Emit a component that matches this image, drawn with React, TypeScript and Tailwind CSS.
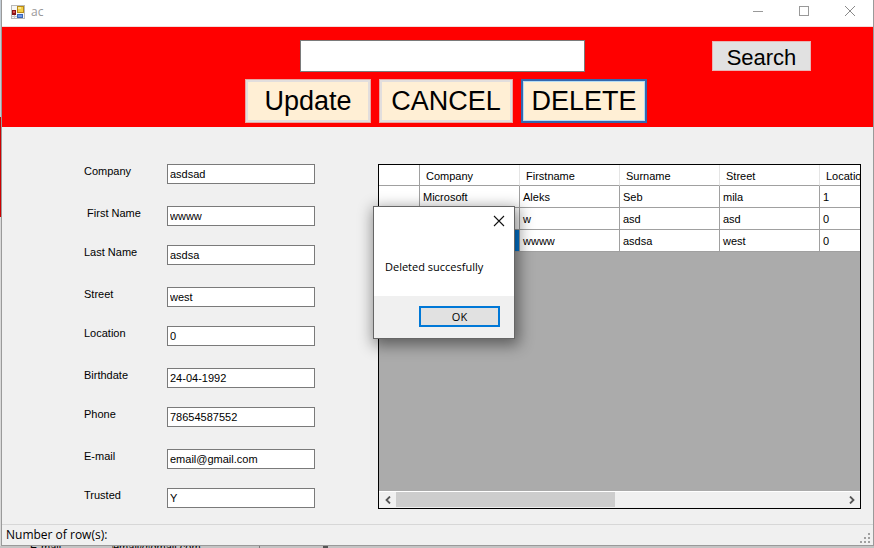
import React from "react";

type Field = { id: string; label: string; value: string };

const fields: Field[] = [
  { id: "company", label: "Company", value: "asdsad" },
  { id: "first-name", label: " First Name", value: "wwww" },
  { id: "last-name", label: "Last Name", value: "asdsa" },
  { id: "street", label: "Street", value: "west" },
  { id: "location", label: "Location", value: "0" },
  { id: "birthdate", label: "Birthdate", value: "24-04-1992" },
  { id: "phone", label: "Phone", value: "78654587552" },
  { id: "email", label: "E-mail", value: "email@gmail.com" },
  { id: "trusted", label: "Trusted", value: "Y" },
];

const columns = ["Company", "Firstname", "Surname", "Street", "Location"];

const rows = [
  ["Microsoft", "Aleks", "Seb", "mila", "1"],
  ["", "w", "asd", "asd", "0"],
  ["", "wwww", "asdsa", "west", "0"],
];

function AppIcon() {
  return (
    <svg width="14" height="14" viewBox="0 0 14 14" shapeRendering="crispEdges" aria-hidden="true">
      <rect x="0.5" y="0.5" width="13" height="13" fill="#f6f6f6" stroke="#b9b9b9" />
      <path d="M1 11.5h5M3.5 10v3" stroke="#c9c9c9" />
      <rect x="6" y="1" width="7" height="7" fill="#b98a16" />
      <rect x="7" y="2" width="5" height="5" fill="#f5cf45" />
      <rect x="7" y="2" width="3" height="2" fill="#fbe791" />
      <rect x="1" y="5" width="4" height="5" fill="#8a1417" />
      <rect x="2" y="6" width="2" height="2" fill="#d9534f" />
      <rect x="6" y="9" width="6" height="4" fill="#3a66b8" />
      <rect x="7" y="10" width="4" height="2" fill="#6f98e6" />
    </svg>
  );
}

function TitleBar() {
  return (
    <div className="flex h-[27px] shrink-0 items-start border-b border-[#f3dcdc] bg-white pl-[9px]">
      <div className="flex h-6 flex-1 items-center gap-[6px]">
        <AppIcon />
        <span className="font-['Open_Sans',sans-serif] text-xs text-[#999999]">ac</span>
      </div>
      <button type="button" aria-label="Minimize" className="flex h-[22px] w-[46px] items-center justify-center">
        <svg width="10" height="11" viewBox="0 0 10 11" shapeRendering="crispEdges">
          <path d="M0 5.5h10" stroke="#999" />
        </svg>
      </button>
      <button type="button" aria-label="Maximize" className="flex h-[22px] w-[46px] items-center justify-center">
        <svg width="10" height="10" viewBox="0 0 10 10" shapeRendering="crispEdges">
          <rect x="0.5" y="0.5" width="9" height="9" fill="none" stroke="#999" />
        </svg>
      </button>
      <button type="button" aria-label="Close" className="flex h-[22px] w-[46px] items-center justify-center">
        <svg width="10" height="10" viewBox="0 0 10 10">
          <path d="M0 0l10 10M10 0L0 10" stroke="#8a8a8a" />
        </svg>
      </button>
    </div>
  );
}

function Toolbar() {
  return (
    <div className="shrink-0 bg-[#ff0000] pt-[13px] pb-1">
      <div className="flex items-center pl-[298px]">
        <input
          type="text"
          aria-label="Search text"
          className="h-8 w-[285px] border border-[#7a7a7a] bg-white px-1 text-xl outline-none"
        />
        <button
          type="button"
          className="ml-[127px] h-[30px] w-[99px] border border-[#e8b4b4] bg-[#e1e1e1] pt-[2px] text-[22px] leading-7"
        >
          Search
        </button>
      </div>
      <div className="mt-[7px] flex gap-2 pl-[243px] text-[27px] leading-10">
        <button type="button" className="h-11 w-[126px] border border-[#e6a9a4] bg-[#ffefd5]">
          <span className="flex h-full items-center justify-center border-2 border-[#e2dedd]">Update</span>
        </button>
        <button type="button" className="h-11 w-[134px] border border-[#e6a9a4] bg-[#ffefd5]">
          <span className="flex h-full items-center justify-center border-2 border-[#e2dedd]">CANCEL</span>
        </button>
        <button type="button" className="h-11 w-[126px] border-2 border-[#3568ae] bg-[#ffefd5]">
          <span className="flex h-full items-center justify-center border border-[#b5dcf5]">DELETE</span>
        </button>
      </div>
    </div>
  );
}

function DetailsForm() {
  return (
    <form className="w-[231px] shrink-0">
      {fields.map((f) => (
        <div key={f.id} className="mt-[19px] flex items-start first:mt-0 even:mt-[22px]">
          <label htmlFor={f.id} className="w-[83px] shrink-0 leading-[14px] whitespace-pre">
            {f.label}
          </label>
          <input
            id={f.id}
            type="text"
            defaultValue={f.value}
            className="h-5 w-[148px] border border-[#7a7a7a] bg-white px-[2px] outline-none"
          />
        </div>
      ))}
    </form>
  );
}

function ScrollBar() {
  return (
    <div className="flex h-[17px] shrink-0 border-t border-white bg-[#f0f0f0]">
      <button type="button" aria-label="Scroll left" className="flex w-[17px] items-center justify-center">
        <svg width="6" height="8" viewBox="0 0 6 8">
          <path d="M5 0.5L1.5 4L5 7.5" fill="none" stroke="#555" strokeWidth="1.8" />
        </svg>
      </button>
      <div className="flex-1 pb-px">
        <div className="h-full w-[49%] bg-[#cdcdcd]" />
      </div>
      <button type="button" aria-label="Scroll right" className="flex w-[17px] items-center justify-center">
        <svg width="6" height="8" viewBox="0 0 6 8">
          <path d="M1 0.5L4.5 4L1 7.5" fill="none" stroke="#555" strokeWidth="1.8" />
        </svg>
      </button>
    </div>
  );
}

function DataGrid() {
  return (
    <div className="flex min-w-0 flex-1 flex-col border border-black bg-[#ababab]">
      <div className="flex-1 overflow-hidden">
        <table className="w-[541px] table-fixed border-separate border-spacing-0 bg-white text-left">
          <thead>
            <tr>
              <th className="h-[21px] w-[41px] border-r border-b border-[#a0a0a0] p-0" />
              {columns.map((c) => (
                <th
                  key={c}
                  className="h-[21px] w-[100px] border-r border-b border-r-[#e5e5e5] border-b-[#a0a0a0] p-0 pt-[2px] pl-[6px] font-normal"
                >
                  {c}
                </th>
              ))}
            </tr>
          </thead>
          <tbody>
            {rows.map((r, i) => (
              <tr key={i}>
                <td className="h-[22px] border-r border-b border-[#a0a0a0] p-0" />
                {r.map((v, j) => (
                  <td
                    key={j}
                    className={
                      i === 2 && j === 0
                        ? "h-[22px] border-r border-b border-[#a0a0a0] bg-[#0078d7] p-0 pt-[2px] pl-[3px] text-white"
                        : "h-[22px] border-r border-b border-[#a0a0a0] p-0 pt-[2px] pl-[3px]"
                    }
                  >
                    {v}
                  </td>
                ))}
              </tr>
            ))}
          </tbody>
        </table>
      </div>
      <ScrollBar />
    </div>
  );
}

function StatusBar() {
  return (
    <div className="flex h-[21px] shrink-0 items-center justify-between border-t border-[#d7d7d7] pl-1">
      <span className="font-['Open_Sans',sans-serif] text-xs">Number of row(s):</span>
      <svg width="10" height="10" viewBox="0 0 10 10" className="mr-[3px] mb-[2px] self-end" fill="#a0a0a0">
        <path d="M8 0h2v2h-2zM4 4h2v2h-2zM8 4h2v2h-2zM0 8h2v2h-2zM4 8h2v2h-2zM8 8h2v2h-2z" />
      </svg>
    </div>
  );
}

function MessageBox() {
  return (
    <div
      role="dialog"
      aria-label="Message"
      className="absolute top-[206px] left-[373px] w-[142px] border border-[#666666] bg-white font-['Open_Sans',sans-serif] shadow-[2px_4px_14px_2px_rgba(0,0,0,0.45)]"
    >
      <div className="flex justify-end pt-[8px] pr-[9px]">
        <button type="button" aria-label="Close message">
          <svg width="12" height="12" viewBox="0 0 12 12" className="block">
            <path d="M1 1l10 10M11 1L1 11" stroke="#111" strokeWidth="1.1" />
          </svg>
        </button>
      </div>
      <p className="pt-8 pb-[21px] pl-[11px] text-[11px] leading-4 whitespace-nowrap">Deleted succesfully</p>
      <div className="flex justify-end bg-[#f0f0f0] pt-[10px] pr-[14px] pb-[11px]">
        <button
          type="button"
          className="h-[21px] w-[81px] border-2 border-[#0078d7] bg-[#e1e1e1] text-[11px] leading-4"
        >
          OK
        </button>
      </div>
    </div>
  );
}

export default function App() {
  return (
    <div className="relative flex h-screen flex-col overflow-hidden bg-[#c4c4c4] font-['Liberation_Sans',Arial,sans-serif] text-[11px] text-black">
      <div className="flex min-h-0 flex-1">
        <div className="flex w-px shrink-0 flex-col">
          <div className="h-[117px] bg-[#c3cdd6]" />
          <div className="h-[100px] bg-[#cc0000]" />
          <div className="flex-1 bg-[#d9d9d9]" />
        </div>
        <div className="flex min-w-0 flex-1 flex-col border-x border-b border-[#9a9a9a] bg-[#f0f0f0]">
          <TitleBar />
          <Toolbar />
          <main className="flex min-h-0 flex-1 pt-[37px] pr-3 pb-[15px] pl-[82px]">
            <DetailsForm />
            <div className="w-[63px] shrink-0" />
            <DataGrid />
          </main>
          <StatusBar />
        </div>
      </div>
      <div className="flex h-[2px] shrink-0 items-center overflow-hidden pl-[30px] leading-none">
        <span className="w-[82px]">E-mail</span>
        <span className="w-[148px] border-x border-[#7a7a7a]">email@gmail.com</span>
        <span className="ml-[63px] h-full w-[5px] bg-[#555555]" />
      </div>
      <MessageBox />
    </div>
  );
}
